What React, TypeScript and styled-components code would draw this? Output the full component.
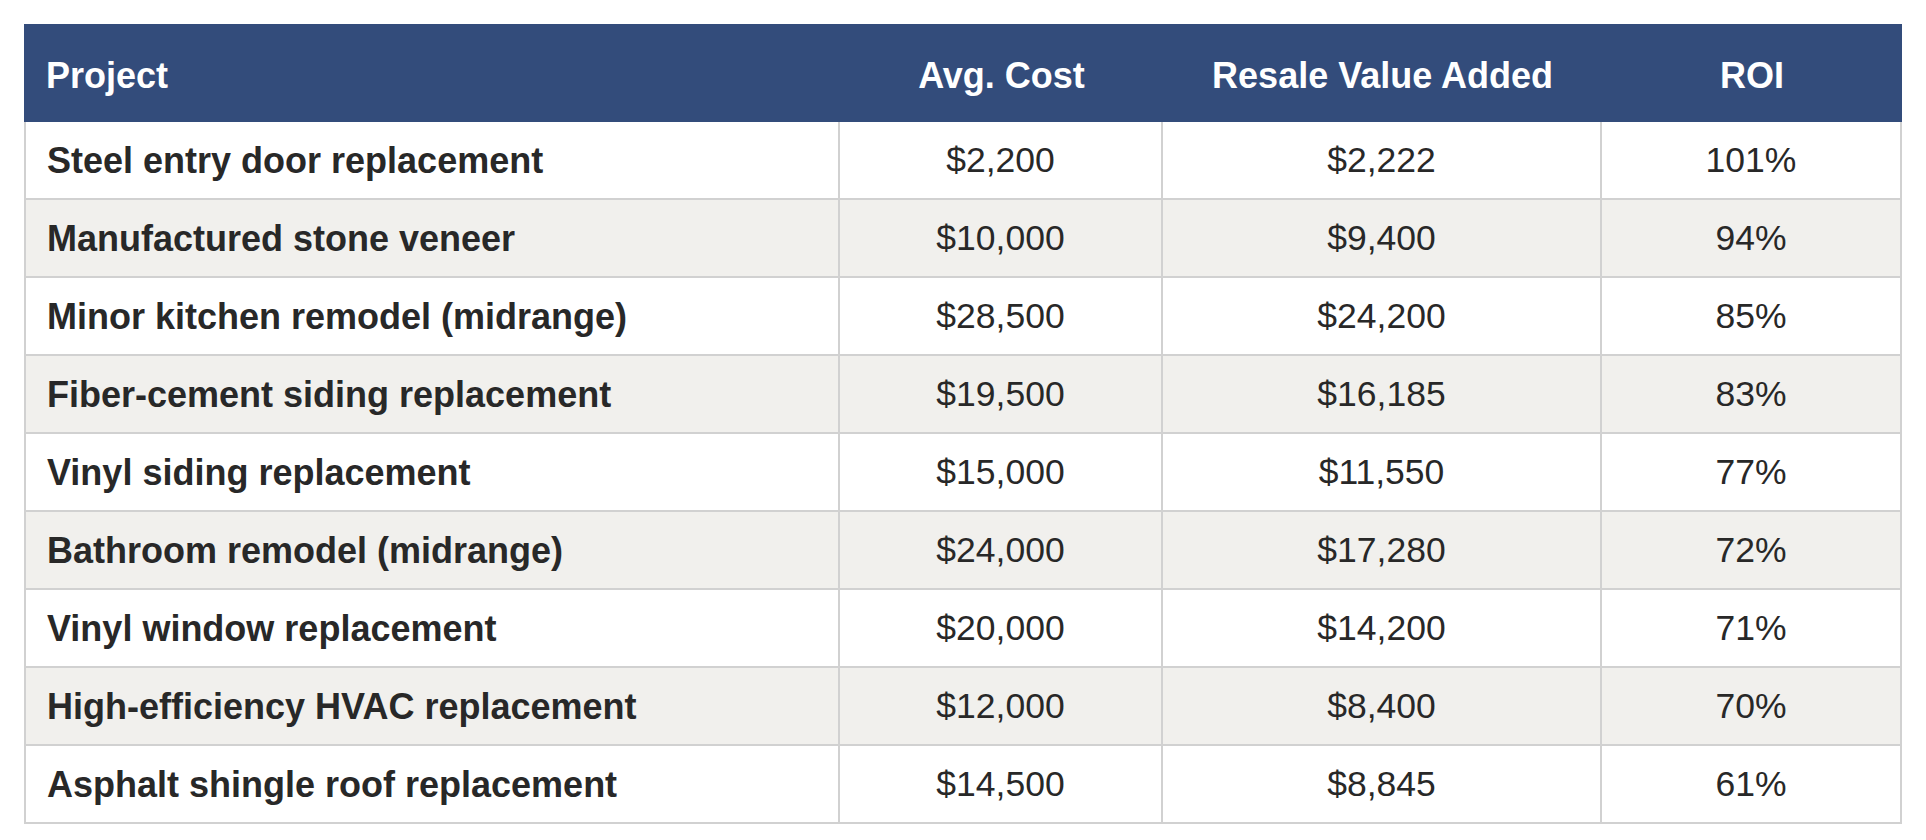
import React from "react";
import styled, { createGlobalStyle } from "styled-components";

const GlobalStyle = createGlobalStyle`
  html, body {
    margin: 0;
    padding: 0;
    background: #ffffff;
  }
  body {
    font-family: "Liberation Sans", Arial, Helvetica, sans-serif;
    color: #2a2a2a;
  }
`;

const Page = styled.div`
  padding: 24px;
  box-sizing: border-box;
  width: 1926px;
`;

const Table = styled.div`
  display: grid;
  grid-template-columns: 816px 323px 439px 300px;
  width: 1878px;
`;

const HeadCell = styled.div<{ $align: "left" | "center" }>`
  height: 98px;
  box-sizing: border-box;
  background: #334c7b;
  color: #ffffff;
  font-weight: 700;
  font-size: 36px;
  display: flex;
  align-items: center;
  justify-content: ${(p) => (p.$align === "left" ? "flex-start" : "center")};
  padding: 5px 0 0 ${(p) => (p.$align === "left" ? "22px" : "0")};
  white-space: nowrap;
`;

const Cell = styled.div<{ $striped: boolean; $first?: boolean }>`
  height: 78px;
  box-sizing: border-box;
  background: ${(p) => (p.$striped ? "#f1f0ed" : "#ffffff")};
  border-right: 2px solid #d1d1d1;
  border-bottom: 2px solid #d1d1d1;
  border-left: ${(p) => (p.$first ? "2px solid #d1d1d1" : "none")};
  font-size: ${(p) => (p.$first ? "36px" : "35.5px")};
  font-weight: ${(p) => (p.$first ? 700 : 400)};
  color: #282828;
  display: flex;
  align-items: center;
  justify-content: ${(p) => (p.$first ? "flex-start" : "center")};
  padding-top: 1px;
  padding-left: ${(p) => (p.$first ? "21px" : "0")};
  white-space: nowrap;
`;

const rows: [string, string, string, string][] = [
  ["Steel entry door replacement", "$2,200", "$2,222", "101%"],
  ["Manufactured stone veneer", "$10,000", "$9,400", "94%"],
  ["Minor kitchen remodel (midrange)", "$28,500", "$24,200", "85%"],
  ["Fiber-cement siding replacement", "$19,500", "$16,185", "83%"],
  ["Vinyl siding replacement", "$15,000", "$11,550", "77%"],
  ["Bathroom remodel (midrange)", "$24,000", "$17,280", "72%"],
  ["Vinyl window replacement", "$20,000", "$14,200", "71%"],
  ["High-efficiency HVAC replacement", "$12,000", "$8,400", "70%"],
  ["Asphalt shingle roof replacement", "$14,500", "$8,845", "61%"],
];

export default function App() {
  return (
    <>
      <GlobalStyle />
      <Page>
        <Table role="table">
          <HeadCell $align="left">Project</HeadCell>
          <HeadCell $align="center">Avg. Cost</HeadCell>
          <HeadCell $align="center">Resale Value Added</HeadCell>
          <HeadCell $align="center">ROI</HeadCell>
          {rows.map((r, i) => (
            <React.Fragment key={r[0]}>
              <Cell $striped={i % 2 === 1} $first>
                {r[0]}
              </Cell>
              <Cell $striped={i % 2 === 1}>{r[1]}</Cell>
              <Cell $striped={i % 2 === 1}>{r[2]}</Cell>
              <Cell $striped={i % 2 === 1}>{r[3]}</Cell>
            </React.Fragment>
          ))}
        </Table>
      </Page>
    </>
  );
}
